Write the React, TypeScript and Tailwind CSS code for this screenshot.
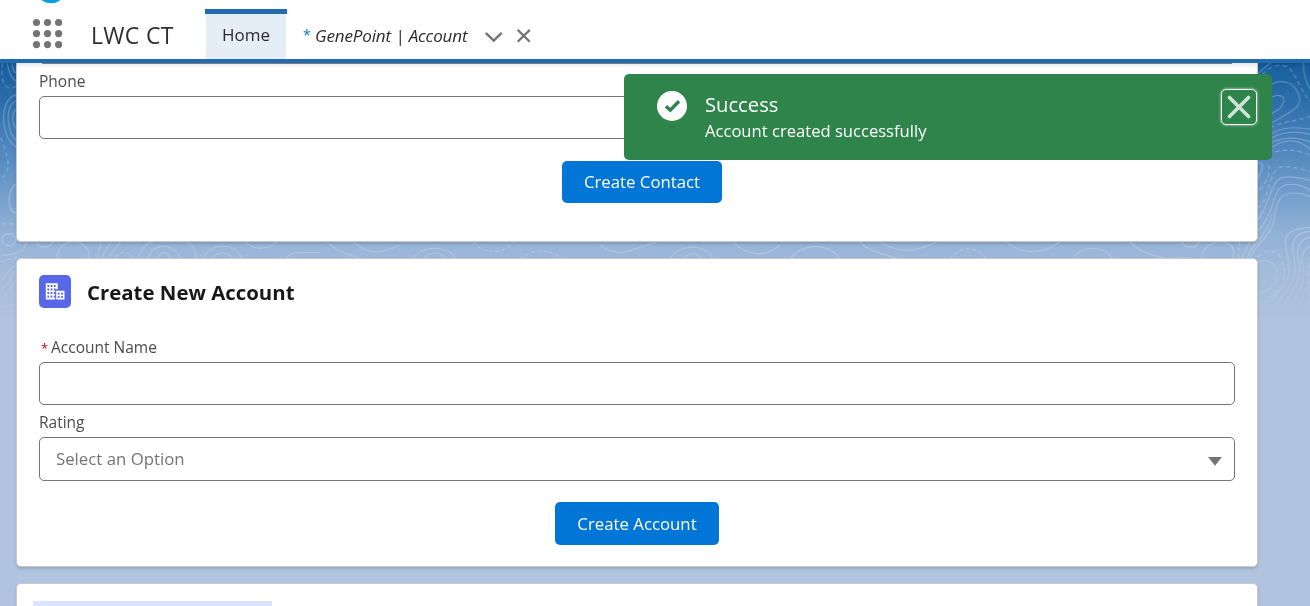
import type { ReactNode } from "react";

function Contours() {
  return (
    <svg className="absolute inset-0" width="1310" height="543" viewBox="0 63 1310 543" fill="none" stroke="#fff" strokeWidth="3.6">
      <defs>
        <linearGradient id="fade" x1="0" y1="240" x2="0" y2="330" gradientUnits="userSpaceOnUse">
          <stop offset="0" stopColor="#fff" />
          <stop offset="1" stopColor="#000" />
        </linearGradient>
        <mask id="m" maskUnits="userSpaceOnUse" x="0" y="0" width="1310" height="606">
          <rect width="1310" height="606" fill="url(#fade)" stroke="none" />
        </mask>
      </defs>
      <g mask="url(#m)" opacity="0.25">
        {/* right margin */}
        <g transform="translate(1250 60) scale(0.3333)">
          <path d="M22 42 L62 8" />
          <path d="M22 62 C50 20 90 5 118 25 C140 50 150 85 180 125" strokeDasharray="14 9" />
          <path d="M160 8 C160 40 165 65 182 90" />
          <path d="M60 76 C85 58 122 62 138 88 C160 122 146 142 122 155 L60 192" />
          <path d="M66 112 C85 100 104 108 101 126 C97 145 80 153 62 162" />
          <path d="M60 204 C100 182 135 186 184 168" strokeDasharray="14 9" />
          <path d="M60 224 C95 200 135 200 184 208" />
          <path d="M60 236 C100 212 145 213 184 224" />
          <path d="M60 249 C100 231 140 228 184 248" />
          <path d="M66 262 C110 232 150 240 184 270" />
          <path d="M75 276 C115 266 140 268 184 288" strokeDasharray="14 9" />
          <path d="M24 310 C42 304 40 322 28 345 L22 362" />
          <path d="M56 315 C62 340 50 370 22 395" strokeDasharray="14 9" />
          <path d="M22 445 C60 420 55 335 90 322 C120 316 145 325 184 336" strokeDasharray="14 9" />
          <path d="M22 480 C60 440 58 365 98 352 C130 346 155 355 184 362" />
          <path d="M22 515 C80 460 60 385 110 374 C140 370 160 378 184 393" />
          <path d="M0 590 C30 540 70 520 74 470 C78 420 95 398 130 399 C155 399 165 404 184 413" />
          <path d="M0 572 C35 535 60 500 66 462" />
          <path d="M184 503 C130 503 95 520 108 565 C120 620 125 650 95 685 C70 715 42 735 44 800" />
          <path d="M184 514 C145 515 120 535 130 580 C142 640 130 665 105 700 C80 730 66 745 66 805" />
          <path d="M184 530 C160 535 135 548 146 600 C156 650 140 680 115 713 C96 740 90 750 92 805" />
          <path d="M184 556 C162 565 150 585 160 625 C165 665 150 690 132 720 C118 745 115 765 122 805" />
          <path d="M184 590 C168 620 182 655 165 690 C155 725 143 730 145 800" strokeDasharray="14 9" />
          <path d="M22 607 C55 592 82 612 82 645 C80 675 55 692 22 700" />
          <path d="M22 592 C45 568 75 568 90 590 C108 620 108 665 85 690 C65 715 40 722 22 750" strokeDasharray="14 9" />
          <path d="M184 640 C175 680 170 720 172 800" />
        </g>
        {/* left margin */}
        <g transform="translate(0 55) scale(0.3333)">
          <path d="M8 24 C5 55 3 85 22 97 C32 100 40 99 48 95" strokeDasharray="14 9" />
          <path d="M22 24 C25 55 34 70 50 80" />
          <path d="M35 24 C38 45 42 52 50 56" />
          <path d="M50 119 C22 123 8 160 11 200 C15 245 30 262 50 278" />
          <path d="M50 138 C30 142 22 170 25 200 C30 235 38 245 50 257" />
          <path d="M50 162 C35 170 34 208 50 222" />
          <path d="M2 248 C15 280 30 320 22 345 C18 360 12 363 5 370" strokeDasharray="14 9" />
          <path d="M50 386 C28 395 22 440 32 462 C38 472 44 474 50 474" />
          <path d="M4 508 C22 504 36 503 50 513" strokeDasharray="14 9" />
        </g>
        {/* gutter between the cards, left half */}
        <g transform="translate(0 225) scale(0.3333)">
          <ellipse cx="26" cy="44" rx="21" ry="18" />
          <path d="M4 91 C45 88 78 82 78 50" />
          <path d="M4 112 C20 100 35 105 50 98" strokeDasharray="12 7" />
          <path d="M4 165 C25 140 34 128 50 117 M4 195 C25 175 34 155 50 137 M4 220 C25 200 34 180 50 168 M4 248 C25 240 34 238 50 236" />
          <path d="M108 50 C120 75 150 68 160 50" />
          <path d="M172 102 C168 75 190 52 218 50 C252 52 275 75 262 102" />
          <path d="M290 102 L304 50 M302 102 L334 50 M322 102 L362 50" />
          <path d="M345 96 C365 75 385 75 398 98" strokeDasharray="12 7" />
          <path d="M415 102 C420 72 440 50 465 50 M443 102 C455 55 515 48 545 102" />
          <path d="M472 102 C480 75 505 78 512 102" />
          <path d="M560 50 C580 60 592 80 584 102 M635 102 C650 78 688 78 700 102" />
          <path d="M608 102 C630 52 700 48 728 102" />
          <path d="M735 50 C760 80 810 72 832 50 M858 98 C880 75 920 85 960 82" />
          <path d="M980 50 C1010 80 1040 85 1080 102 M1060 50 C1100 88 1140 90 1200 60" />
          <path d="M1240 102 C1260 60 1340 58 1370 102 M1270 102 C1290 78 1320 78 1340 102" />
          <path d="M1420 50 C1450 90 1510 90 1540 50 M1560 102 C1600 70 1640 70 1690 102" strokeDasharray="12 7" />
        </g>
        {/* gutter between the cards, right half */}
        <g transform="translate(600 225) scale(0.3333)">
          <path d="M0 60 C60 110 120 60 170 52 M210 102 C230 60 310 50 340 102 M250 102 C270 80 290 80 305 102" />
          <path d="M400 50 C440 95 500 98 540 60 M570 102 C610 50 690 55 720 102" />
          <path d="M780 50 C800 78 860 90 900 102 M840 50 C900 88 950 80 1010 50" />
          <path d="M1050 102 C1080 62 1130 62 1160 102" strokeDasharray="12 7" />
          <path d="M1220 50 C1260 90 1330 90 1380 50 M1420 102 C1440 60 1510 60 1540 102 M1590 50 C1610 80 1660 90 1700 102" />
        </g>
        <g transform="translate(1170 200) scale(0.3333)">
          <path d="M36 125 C45 148 80 146 88 125" />
          <path d="M98 175 C90 150 120 128 150 125 C185 125 198 148 187 175" />
          <path d="M208 125 L205 172" strokeDasharray="12 7" />
          <path d="M216 175 L240 125 M230 175 L256 125" />
          <path d="M0 175 C20 168 40 172 55 176" strokeDasharray="12 7" />
        </g>
      </g>
    </svg>
  );
}

const Label = ({ children, required }: { children: ReactNode; required?: boolean }) => (
  <div className="flex h-[22px] items-center text-[15.5px] leading-[22px] whitespace-pre text-[#4c4c4c]">
    {required && <span className="mt-px mr-[3px] ml-[2px] w-[7px] text-[13px] leading-[22px] text-[#ba0517]">*</span>}
    {children}
  </div>
);

const Button = ({ children, className }: { children: ReactNode; className: string }) => (
  <button className={`flex items-center justify-center rounded-[5px] bg-[#0176d7] text-[16.8px] whitespace-nowrap text-white ${className}`}>
    {children}
  </button>
);

function Header() {
  return (
    <header className="relative z-10 flex h-[63px] shrink-0 border-b-4 border-[#216cae] bg-white shadow-[0_2px_4px_rgba(0,0,0,0.12)]">
      <svg className="absolute top-0 left-[40px]" width="22" height="4">
        <ellipse cx="11" cy="-4.5" rx="11.5" ry="7.7" fill="#0d9dda" />
      </svg>
      <svg className="mt-[18px] ml-[32px] shrink-0" width="32" height="32" fill="#747474">
        {[4.5, 15.6, 26.6].map((y) => [4.5, 15.5, 26.6].map((x) => <circle key={`${x}-${y}`} cx={x} cy={y} r="3.6" />))}
      </svg>
      <h1 className="mt-[19px] ml-[27px] w-[114px] text-[23px] leading-[32px] tracking-[0.3px] whitespace-nowrap text-[#2e2e2e]">LWC CT</h1>
      <div className="mt-[9px] flex w-[82px] flex-col border-t-[5px] border-[#216cae]">
        <div className="mx-px flex-1 bg-[#e5edf6] pl-[16px] text-[17px] leading-[41px] text-[#2b2b2b]">Home</div>
      </div>
      <div className="mt-[24px] ml-[16px] flex h-[24px] text-[17px] leading-[24px] text-[#2b2b2b]">
        <span className="w-[12px] text-[14px] leading-[22px] text-[#0176d3]">*</span>
        <span className="w-[169.5px] tracking-[-0.14px] whitespace-nowrap italic">GenePoint | Account</span>
        <svg width="50" height="24" fill="none" stroke="#747474" strokeWidth="2.4">
          <path d="M1.5 9.6 L8.7 16.6 L15.9 9.6" strokeLinecap="round" />
          <path d="M32.7 5.9 L44.8 17.8 M44.8 5.9 L32.7 17.8" strokeWidth="2.2" />
        </svg>
      </div>
    </header>
  );
}

function Toast() {
  return (
    <div className="absolute top-[74px] left-[624px] z-20 flex h-[86px] w-[648px] rounded-[5px] bg-[#2e844a] pl-[33px] text-white">
      <svg className="mt-[17px] shrink-0" width="30" height="30" fill="none">
        <circle cx="15" cy="15" r="15" fill="#fff" />
        <path d="M8.9 15.2 L13.3 19.2 L22 10.3" stroke="#2e844a" strokeWidth="3.4" />
      </svg>
      <div className="mt-[16px] ml-[18px] flex-1 whitespace-nowrap">
        <div className="text-[20.2px] leading-[28px]">Success</div>
        <div className="text-[16.6px] leading-[26px]">Account created successfully</div>
      </div>
      <button className="mt-[15px] mr-[15px] flex h-[36px] w-[36px] items-center justify-center rounded-[5px] border border-white shadow-[0_0_3px_rgba(255,255,255,0.8)]">
        <svg width="24" height="24" stroke="#fff" strokeOpacity="0.77" strokeWidth="3.6" strokeLinecap="round">
          <path d="M2.5 2.5 L21.5 21.5 M21.5 2.5 L2.5 21.5" />
        </svg>
      </button>
    </div>
  );
}

function BuildingIcon() {
  return (
    <svg width="32" height="33" className="rounded-[5px] bg-[#5867e8]">
      <path d="M6.8 8.3h12v6h-2.6v10.2H6.8z M17.2 15.8h8.3v8.7h-8.3z" fill="#fff" />
      <g fill="#5867e8">
        {[10, 13.5, 17, 20.6].map((y) => [8.4, 11.6, 14.8].map((x) => <rect key={`${x}-${y}`} x={x} y={y} width="1.8" height="2" />))}
        {[17.7, 21].map((y) => [18.8, 22.1].map((x) => <rect key={`${x}-${y}`} x={x} y={y} width="1.8" height="1.9" />))}
      </g>
    </svg>
  );
}

const card = "ml-[16px] w-[1242px] shrink-0 border border-[#c9c9c9] bg-white shadow-[0_2px_3px_rgba(0,0,0,0.14)]";

export default function App() {
  return (
    <div className="relative flex h-[606px] w-[1310px] flex-col overflow-hidden bg-white font-['Open_Sans','Noto_Sans',sans-serif]">
      <Header />
      <main className="relative flex-1 overflow-hidden bg-[#b0c4df] bg-[linear-gradient(180deg,#175d9d_0px,#2d6fab_40px,#4f86bd_85px,#6f9bca_125px,#8eafd4_165px,#a3badb_205px,#b0c4df_260px)]">
        <Contours />
        <div className="relative flex flex-col">
          <section className={`${card} h-[179px] rounded-b-[5px] border-t-0 px-[22px]`}>
            <div className="mx-[3px] h-px bg-[#8a8a8a]" />
            <div className="mt-[6px]"><Label>Phone</Label></div>
            <div className="mt-[4px] h-[43px] rounded-[5px] border border-[#747474] bg-white" />
            <Button className="mt-[22px] ml-[523px] h-[42px] w-[160px]">Create Contact</Button>
          </section>
          <section className={`${card} mt-[16px] h-[309px] rounded-[5px] px-[22px] pt-[16px]`}>
            <div className="flex h-[33px]">
              <BuildingIcon />
              <h2 className="ml-[16px] text-[20.4px] leading-[34px] font-bold text-[#181818]">Create New Account</h2>
            </div>
            <div className="mt-[28px]"><Label required>Account Name</Label></div>
            <div className="mt-[4px] h-[43px] rounded-[5px] border border-[#747474] bg-white" />
            <div className="mt-[6px]"><Label>Rating</Label></div>
            <div className="mt-[4px] flex h-[44px] items-center justify-between rounded-[5px] border border-[#747474] pr-[12px] pl-[16px] text-[16.8px] text-[#747474]">
              <span>Select an Option</span>
              <svg width="14" height="9" className="mt-[5px]"><path d="M0 0h14l-7 8.7z" fill="#747474" /></svg>
            </div>
            <Button className="mx-auto mt-[21px] h-[43px] w-[164px]">Create Account</Button>
          </section>
          <section className={`${card} mt-[16px] h-[40px] rounded-t-[5px] pt-[17px] pl-[16px]`}>
            <div className="h-[20px] w-[239px] bg-[#d8e6fe]" />
          </section>
        </div>
      </main>
      <Toast />
    </div>
  );
}
